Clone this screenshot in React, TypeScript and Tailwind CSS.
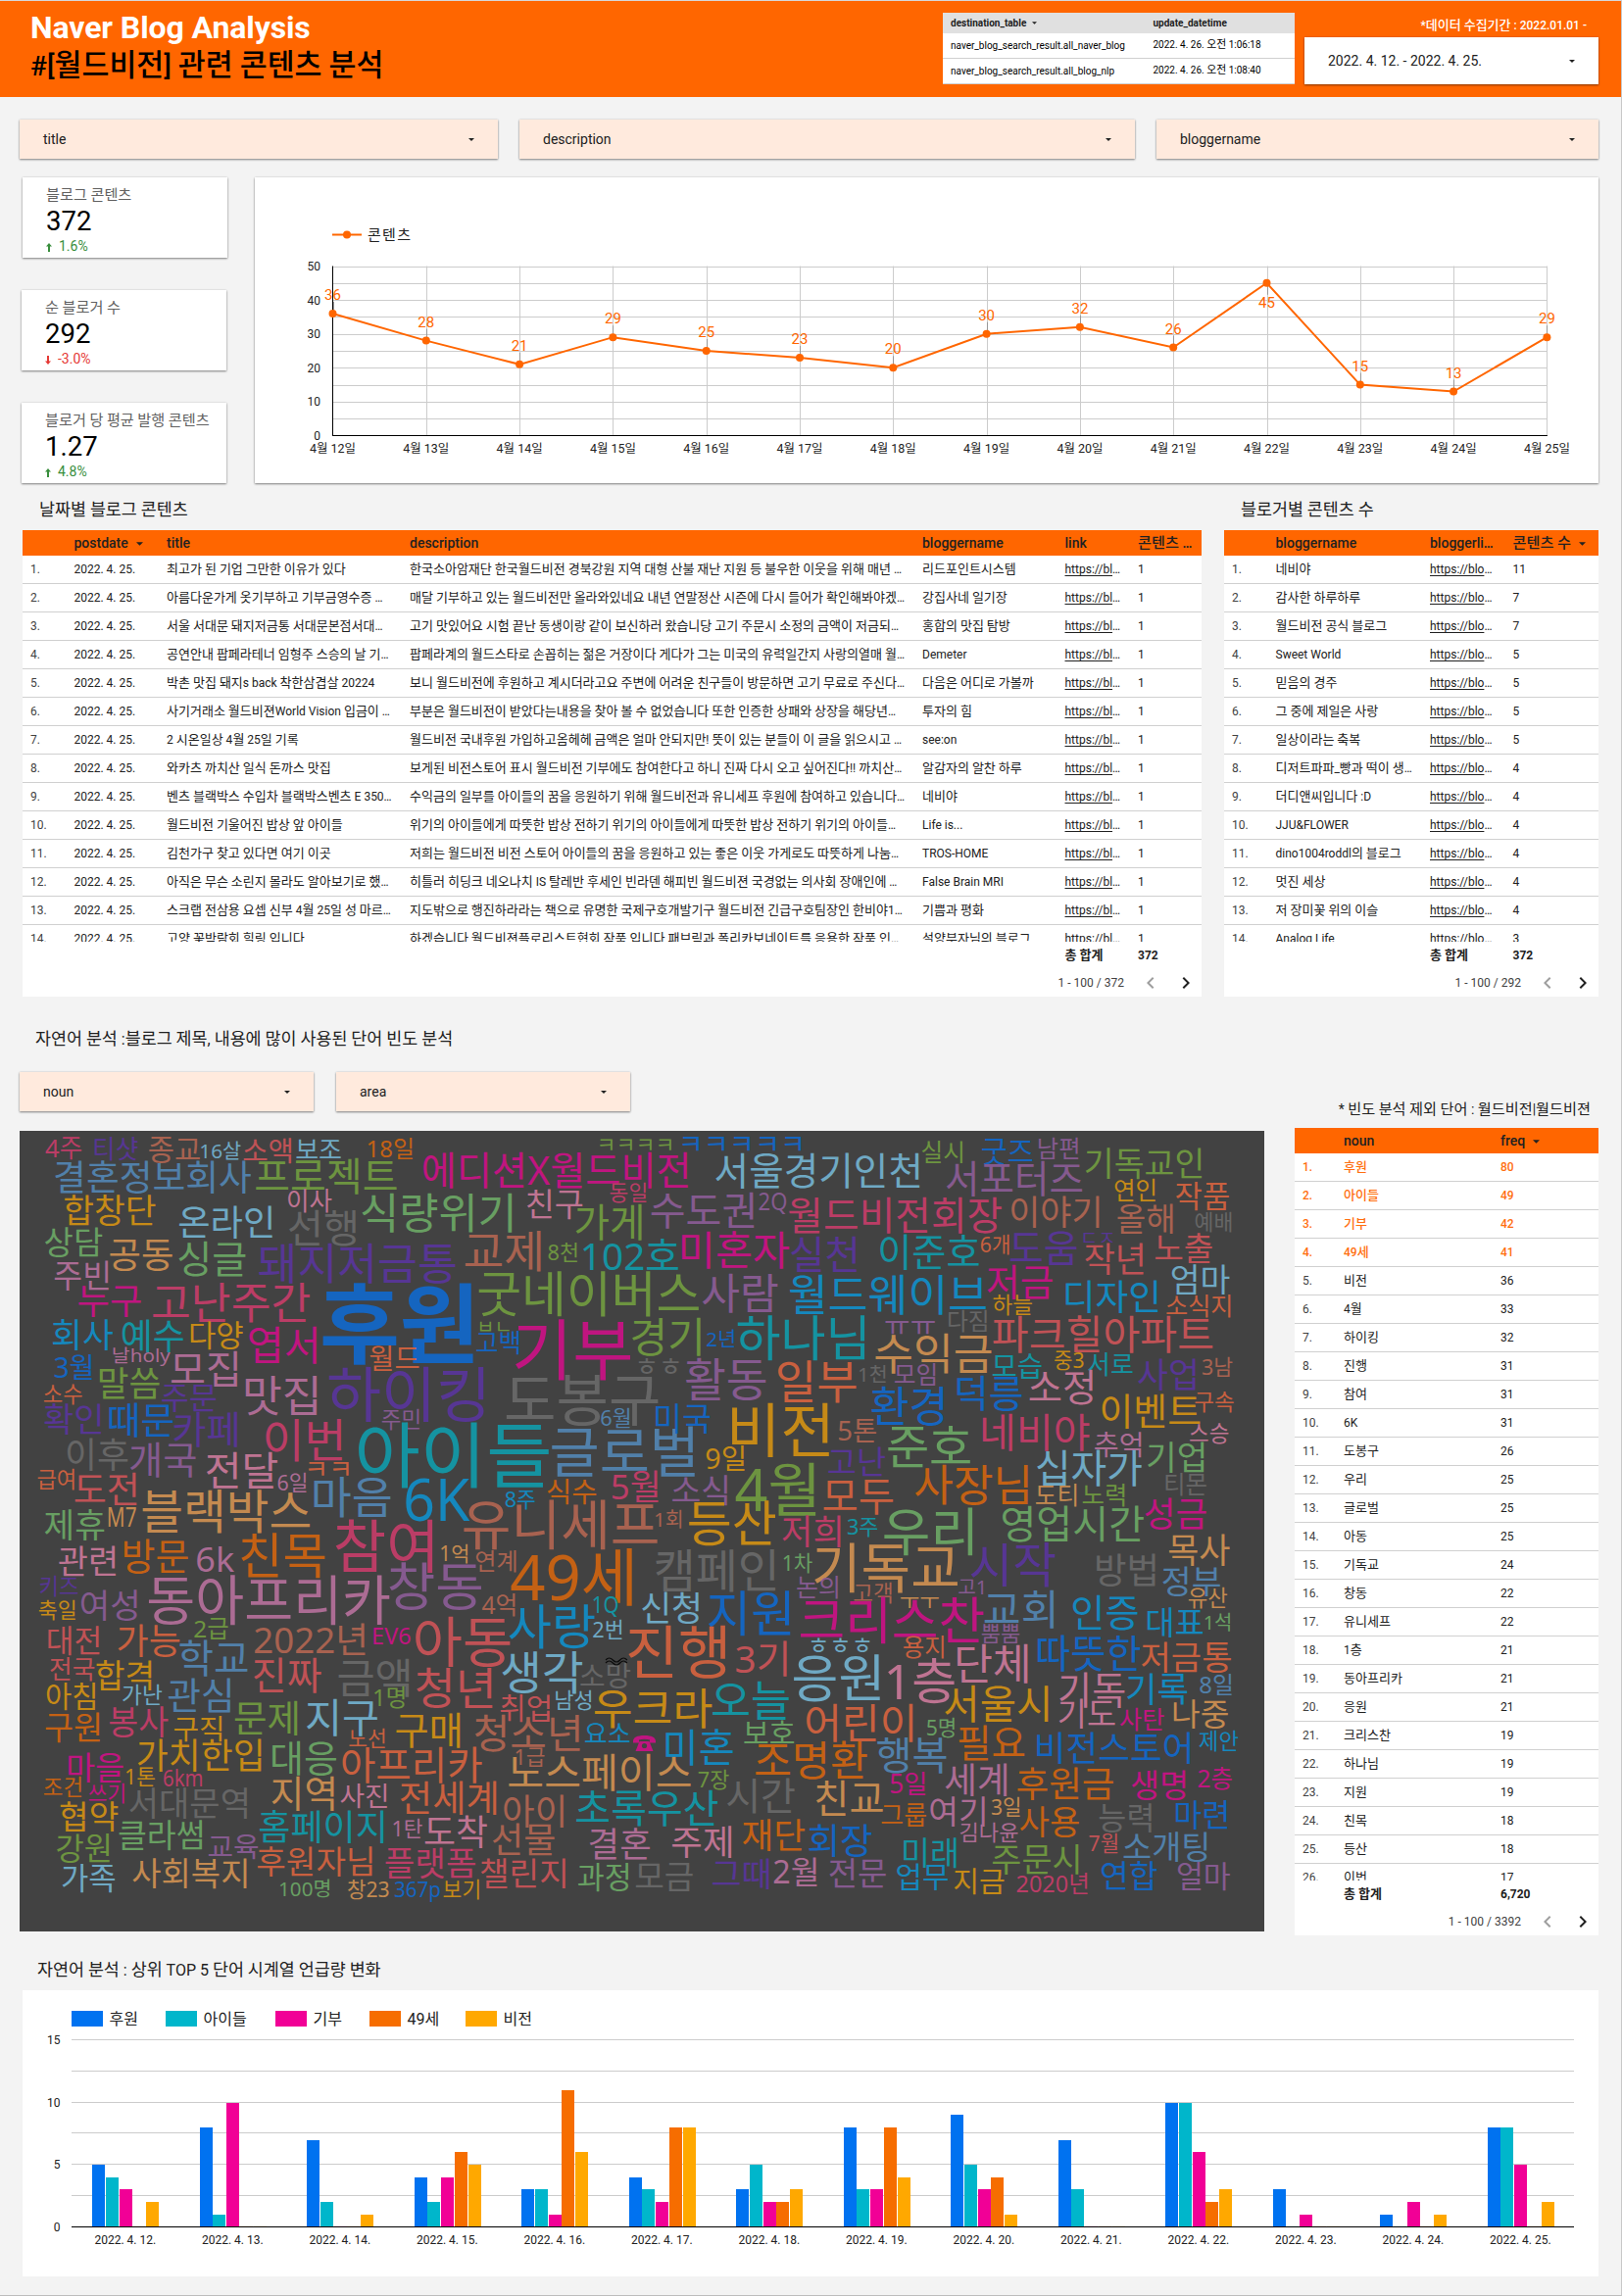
import React from "react";

/* ---------- text helpers ---------- */

const HANGUL = /([\uAC00-\uD7A3\u3131-\u3163]+)/;

/** Latin runs keep the parent's size; Hangul runs are set slightly larger so a syllable fills one em. */
function Ko({ children }: { children: string }) {
  return (
    <>
      {children.split(HANGUL).map((part, i) =>
        i % 2 === 1 ? (
          <span key={i} className="text-[1.085em]">
            {part}
          </span>
        ) : (
          part
        )
      )}
    </>
  );
}

function Caret({ className = "" }: { className?: string }) {
  return (
    <svg viewBox="0 0 6 3" className={`shrink-0 ${className}`} fill="currentColor">
      <path d="M0 0h6L3 3z" />
    </svg>
  );
}

function SectionTitle({ className = "", children }: { className?: string; children: string }) {
  return (
    <h2 className={`whitespace-nowrap text-[16px] leading-[24px] text-[#212121] ${className}`}>
      <Ko>{children}</Ko>
    </h2>
  );
}

const CARD_SHADOW = "shadow-[0_1px_2px_rgba(0,0,0,0.45),0_0_2px_rgba(0,0,0,0.12)]";

function Filter({ label, className }: { label: string; className: string }) {
  return (
    <div
      className={`flex h-[40px] items-center justify-between bg-[#ffeadd] pl-[24px] pr-[24px] text-[14px] text-[#212121] ${CARD_SHADOW} ${className}`}
    >
      <span>{label}</span>
      <Caret className="h-[3px] w-[6px]" />
    </div>
  );
}

/* ---------- header ---------- */

function Header() {
  return (
    <header className="flex h-[98px] bg-[#ff6600] pl-[31px]">
      <div className="w-[931px] whitespace-nowrap pt-[7px] font-bold">
        <div className="text-[32px] leading-[40px] tracking-[-0.1px] text-white">Naver Blog Analysis</div>
        <div className="text-[28px] font-medium leading-[38px] text-black">
          <Ko>#[월드비전] 관련 콘텐츠 분석</Ko>
        </div>
      </div>
      <div className="mt-[12px] h-[73px] w-[359px] bg-white text-[10px] text-black">
        <div className="grid h-[21px] grid-cols-[206.5px_1fr] items-center bg-[#e0e0e0] pl-[8px] font-bold text-[#212121]">
          <span className="flex items-center gap-[6px]">
            destination_table
            <Caret className="h-[3px] w-[5px]" />
          </span>
          <span>update_datetime</span>
        </div>
        {[
          ["naver_blog_search_result.all_naver_blog", "2022. 4. 26. 오전 1:06:18"],
          ["naver_blog_search_result.all_blog_nlp", "2022. 4. 26. 오전 1:08:40"],
        ].map(([name, date]) => (
          <div
            key={name}
            className="grid h-[26px] grid-cols-[206.5px_1fr] items-center border-b border-[#d0d0d0] pl-[8px]"
          >
            <span>{name}</span>
            <span>
              <Ko>{date}</Ko>
            </span>
          </div>
        ))}
      </div>
      <div className="ml-[10px] w-[300px]">
        <div className="flex h-[37px] items-center justify-end pr-[12px] pt-[12px] text-[12px] font-medium leading-[16px] text-white">
          <span>
            <Ko>*데이터 수집기간 : 2022.01.01 -</Ko>
          </span>
        </div>
        <div
          className={`flex h-[48px] items-center justify-between bg-white pl-[24px] pr-[24px] text-[14px] text-[#212121] ${CARD_SHADOW}`}
        >
          <span>2022. 4. 12. - 2022. 4. 25.</span>
          <Caret className="h-[3px] w-[6px]" />
        </div>
      </div>
    </header>
  );
}

/* ---------- score cards ---------- */

function Score({
  label,
  value,
  delta,
  up,
  className = "",
}: {
  label: string;
  value: string;
  delta: string;
  up: boolean;
  className?: string;
}) {
  return (
    <div className={`h-[82px] w-[209px] bg-white pl-[24px] pt-[8px] ${CARD_SHADOW} ${className}`}>
      <div className="whitespace-nowrap text-[14px] leading-[20px] text-[#616161]">
        <Ko>{label}</Ko>
      </div>
      <div className="text-[27.5px] leading-[34px] text-black">{value}</div>
      <div
        className={`flex items-center gap-[7px] text-[14px] leading-[16px] ${
          up ? "text-[#388e3c]" : "text-[#e53935]"
        }`}
      >
        <svg viewBox="0 0 6 9" className={`mt-[3px] h-[9px] w-[6px] ${up ? "" : "rotate-180"}`} fill="currentColor">
          <path d="M3 0l3 3.6H4V9H2V3.6H0z" />
        </svg>
        <span>{delta}</span>
      </div>
    </div>
  );
}

/* ---------- line chart ---------- */

const DAILY = [36, 28, 21, 29, 25, 23, 20, 30, 32, 26, 45, 15, 13, 29];

function LineChart() {
  const x0 = 79.5;
  const step = 95.3;
  const y = (v: number) => 263.5 - v * 3.46;
  const x = (i: number) => x0 + i * step;
  return (
    <svg width="1371" height="312" className="block" fontFamily="Roboto, 'Noto Sans CJK KR', sans-serif">
      <line x1="79" x2="109" y1="58.5" y2="58.5" stroke="#ff6600" strokeWidth="2" />
      <circle cx="94" cy="58.5" r="4" fill="#ff6600" />
      <text x="115" y="64" fontSize="15" textLength="44" fill="#212121">
        콘텐츠
      </text>
      {Array.from({ length: 10 }, (_, i) => (
        <line key={i} x1={x0} x2={x(13)} y1={Math.round(y(i * 5 + 5)) + 0.5} y2={Math.round(y(i * 5 + 5)) + 0.5} stroke="#ccc" />
      ))}
      {DAILY.slice(1).map((_, i) => (
        <line key={i} x1={Math.round(x(i + 1)) + 0.5} x2={Math.round(x(i + 1)) + 0.5} y1={y(50)} y2={y(0)} stroke="#ccc" />
      ))}
      <line x1={x0} x2={x0} y1={y(50)} y2={y(0)} stroke="#000" />
      <line x1={x0 - 0.5} x2={x(13) + 0.5} y1="263.5" y2="263.5" stroke="#000" />
      {[0, 10, 20, 30, 40, 50].map((v) => (
        <text key={v} x="67" y={y(v) + 4.5} fontSize="12" textAnchor="end" fill="#212121">
          {v}
        </text>
      ))}
      {DAILY.map((v, i) => (
        <line
          key={i}
          x1={Math.round(x(i)) + 0.5}
          x2={Math.round(x(i)) + 0.5}
          y1={y(v)}
          y2={v === 45 ? y(v) + 12 : y(v) - 12}
          stroke="#999"
        />
      ))}
      <polyline
        points={DAILY.map((v, i) => `${x(i)},${y(v)}`).join(" ")}
        fill="none"
        stroke="#ff6600"
        strokeWidth="2"
      />
      {DAILY.map((v, i) => (
        <g key={i}>
          <circle cx={x(i)} cy={y(v)} r="4" fill="#ff6600" />
          <text x={x(i)} y={v === 45 ? y(v) + 25 : y(v) - 14} fontSize="15" textAnchor="middle" fill="#ff6600">
            {v}
          </text>
          <text x={x(i)} y="281" fontSize="12" textAnchor="middle" textLength="47" lengthAdjust="spacingAndGlyphs" fill="#212121">
            {`4월 ${12 + i}일`}
          </text>
        </g>
      ))}
    </svg>
  );
}

/* ---------- tables ---------- */

type TableProps = {
  cols: string;
  head: string[];
  sorted: number;
  rows: string[][];
  totals: string[];
  page: string;
  bodyClass: string;
  links?: number;
  highlight?: number;
  className: string;
};

function DataTable({ cols, head, sorted, rows, totals, page, bodyClass, links = -1, highlight = 0, className }: TableProps) {
  return (
    <div className={`bg-white text-[12px] text-[#212121] ${className}`}>
      <div className={`grid h-[26px] items-center bg-[#ff6600] pl-[8px] text-[14px] font-medium text-[#212121] ${cols}`}>
        {head.map((h, i) => (
          <span key={i} className="flex items-center whitespace-nowrap leading-[20px]">
            <span>
              <Ko>{h}</Ko>
            </span>
            {i === sorted && <Caret className="ml-[8px] mt-[2px] h-[4px] w-[7px]" />}
          </span>
        ))}
      </div>
      <div className={`overflow-hidden ${bodyClass}`}>
        {rows.map((r, ri) => (
          <div
            key={ri}
            className={`grid h-[29px] items-center border-b border-[#d0d0d0] pl-[8px] ${cols} ${
              ri < highlight ? "font-medium text-[#ff6f10]" : ""
            }`}
          >
            <span className={ri < highlight ? "" : "text-[#424242]"}>{ri + 1}.</span>
            {r.map((c, ci) => (
              <span key={ci} className="whitespace-nowrap leading-[18px]">
                {ci + 1 === links ? (
                  <>
                    <span className="underline underline-offset-2">{c}</span>…
                  </>
                ) : (
                  <Ko>{c}</Ko>
                )}
              </span>
            ))}
          </div>
        ))}
      </div>
      <div className={`grid h-[28px] items-center pl-[8px] font-bold ${cols}`}>
        {totals.map((t, i) => (
          <span key={i} className="leading-[18px]">
            <Ko>{t}</Ko>
          </span>
        ))}
      </div>
      <div className="flex h-[28px] items-center justify-end pr-[4px]">
        <span className="mr-[15px] text-[#424242]">{page}</span>
        <svg viewBox="0 0 24 24" className="size-[24px] text-[#9e9e9e]" fill="currentColor">
          <path d="M15.41 7.41L14 6l-6 6 6 6 1.41-1.41L10.83 12z" />
        </svg>
        <svg viewBox="0 0 24 24" className="ml-[12px] size-[24px] text-[#212121]" fill="currentColor">
          <path d="M10 6L8.59 7.41 13.17 12l-4.58 4.59L10 18l6-6z" />
        </svg>
      </div>
    </div>
  );
}

const POSTS: [string, string, string][] = [
  ["최고가 된 기업 그만한 이유가 있다", "한국소아암재단 한국월드비전 경북강원 지역 대형 산불 재난 지원 등 불우한 이웃을 위해 매년 …", "리드포인트시스템"],
  ["아름다운가게 옷기부하고 기부금영수증 …", "매달 기부하고 있는 월드비전만 올라와있네요 내년 연말정산 시즌에 다시 들어가 확인해봐야겠…", "강집사네 일기장"],
  ["서울 서대문 돼지저금통 서대문본점서대…", "고기 맛있어요 시험 끝난 동생이랑 같이 보신하러 왔습니당 고기 주문시 소정의 금액이 저금되…", "홍합의 맛집 탐방"],
  ["공연안내 팝페라테너 임형주 스승의 날 기…", "팝페라계의 월드스타로 손꼽히는 젊은 거장이다 게다가 그는 미국의 유력일간지 사랑의열매 월…", "Demeter"],
  ["박촌 맛집 돼지s back 착한삼겹살 20224", "보니 월드비전에 후원하고 계시더라고요 주변에 어려운 친구들이 방문하면 고기 무료로 주신다…", "다음은 어디로 가볼까"],
  ["사기거래소 월드비젼World Vision 입금이 …", "부분은 월드비전이 받았다는내용을 찾아 볼 수 없었습니다 또한 인증한 상패와 상장을 해당년…", "투자의 힘"],
  ["2 시온일상 4월 25일 기록", "월드비전 국내후원 가입하고옴헤헤 금액은 얼마 안되지만! 뜻이 있는 분들이 이 글을 읽으시고 …", "see:on"],
  ["와카츠 까치산 일식 돈까스 맛집", "보게된 비전스토어 표시 월드비전 기부에도 참여한다고 하니 진짜 다시 오고 싶어진다!! 까치산…", "알감자의 알찬 하루"],
  ["벤츠 블랙박스 수입차 블랙박스벤츠 E 350…", "수익금의 일부를 아이들의 꿈을 응원하기 위해 월드비전과 유니세프 후원에 참여하고 있습니다…", "네비야"],
  ["월드비전 기울어진 밥상 앞 아이들", "위기의 아이들에게 따뜻한 밥상 전하기 위기의 아이들에게 따뜻한 밥상 전하기 위기의 아이들…", "Life is..."],
  ["김천가구 찾고 있다면 여기 이곳", "저희는 월드비전 비전 스토어 아이들의 꿈을 응원하고 있는 좋은 이웃 가게로도 따뜻하게 나눔…", "TROS-HOME"],
  ["아직은 무슨 소린지 몰라도 알아보기로 했…", "히틀러 히딩크 네오나치 IS 탈레반 후세인 빈라덴 해피빈 월드비젼 국경없는 의사회 장애인에 …", "False Brain MRI"],
  ["스크랩 전삼용 요셉 신부 4월 25일 성 마르…", "지도밖으로 행진하라라는 책으로 유명한 국제구호개발기구 월드비전 긴급구호팀장인 한비야1…", "기쁨과 평화"],
  ["고양 꽃박람회 힐링 입니다", "하겠습니다 월드비젼플로리스트협회 작품 입니다 패브릭과 폴리카보네이트를 응용한 작품 인…", "설양부자님의 블로그"],
];

const BLOGGERS: [string, string][] = [
  ["네비야", "11"],
  ["감사한 하루하루", "7"],
  ["월드비전 공식 블로그", "7"],
  ["Sweet World", "5"],
  ["믿음의 경주", "5"],
  ["그 중에 제일은 사랑", "5"],
  ["일상이라는 축복", "5"],
  ["디저트파파_빵과 떡이 생…", "4"],
  ["더디앤씨입니다 :D", "4"],
  ["JJU&FLOWER", "4"],
  ["dino1004roddl의 블로그", "4"],
  ["멋진 세상", "4"],
  ["저 장미꽃 위의 이슬", "4"],
  ["Analog Life", "3"],
];

const NOUNS: [string, string][] = [
  ["후원", "80"], ["아이들", "49"], ["기부", "42"], ["49세", "41"], ["비전", "36"], ["4월", "33"], ["하이킹", "32"],
  ["진행", "31"], ["참여", "31"], ["6K", "31"], ["도봉구", "26"], ["우리", "25"], ["글로벌", "25"], ["아동", "25"],
  ["기독교", "24"], ["창동", "22"], ["유니세프", "22"], ["1층", "21"], ["동아프리카", "21"], ["응원", "21"],
  ["크리스찬", "19"], ["하나님", "19"], ["지원", "19"], ["친목", "18"], ["등산", "18"], ["이번", "17"],
];

/* ---------- word cloud ---------- */

const INK: Record<string, string> = {
  B: "#1565c0", T: "#1593a1", M: "#c01580", O: "#c46114", Y: "#c68a17", G: "#6d9440", P: "#573694",
  V: "#c9603f", R: "#bb3d66", K: "#1588be", D: "#666666", E: "#689f62", S: "#5180aa", C: "#c05256",
  N: "#c48a50", U: "#855a8f", W: "#a86250", X: "#bf7492", Q: "#ac6c94", L: "#6fa9c4",
};

/* Each quadrant has an origin and a grid density; a word is "text left right middle ink" on that grid. */
const CLOUD: { ox: number; oy: number; sx: number; words: string }[] = [
  {
    ox: -20, oy: -134, sx: 2.376,
    words: `4주 112 198 456 R,티샷 226 333 458 P,종교 361 485 460 W,16살 485 583 463 L,소액 590 710 463 C,보조 718 827 460 L,18일 890 1003 457 O,ㅋㅋㅋㅋ 1448 1634 444 G,결혼정보회사 132 607 545 S,프로젝트 620 962 540 G,에디션X월드비전 1025 1673 523 M,합창단 156 376 647 Y,온라인 434 665 684 L,이사 696 803 616 X,선행 700 868 700 D,식량위기 876 1250 652 E,친구 1276 1413 628 X,동일 1479 1569 592 R,가게 1395 1561 683 G,상담 109 247 744 E,공동 266 418 783 N,싱글 432 596 793 E,돼지저금통 628 1105 808 P,교제 1127 1317 771 W,8천 1329 1402 773 G,102호 1410 1645 785 T,주빈 132 268 847 Q,누구 190 342 922 M,고난주간 370 750 928 R,후원 783 1155 992 B,굿네이버스 1160 1695 902 G,회사 127 272 1027 K,예수 295 445 1030 T,다양 459 588 1028 Y,엽서 602 775 1058 M,ㅂㄴ 1157 1240 1000 G,고백 1155 1262 1051 B,기부 1247 1530 1074 M,3월 132 227 1128 B,날holy 272 411 1090 Q,모집 415 583 1132 Q,월드 897 1016 1100 V,말씀 238 387 1174 G,소수 106 199 1207 V,주문 392 524 1220 P,맛집 591 777 1215 Q,하이킹 797 1185 1210 P,도봉구 1227 1597 1225 D,확인 108 250 1284 P,때문 262 420 1286 B,카페 420 580 1318 P,주민 926 1020 1286 U,6월 1457 1530 1282 S,이번 640 836 1348 R,아이들 866 1332 1396 T,글로벌 1337 1691 1383 S,이후 160 310 1393 D,개국 315 475 1409 U`,
  },
  {
    ox: 620, oy: -134, sx: 2.34,
    words: `ㅋㅋㅋㅋㅋ 124 423 443 B,실시 703 805 468 G,굿즈 847 968 466 B,남편 980 1080 456 U,기독교인 1093 1376 504 G,서울경기인천 211 703 524 L,서포터즈 762 1087 548 U,연인 1163 1264 585 Y,작품 1310 1437 602 V,수도권 57 308 646 U,2Q 315 380 615 U,월드비전회장 386 893 660 R,이야기 914 1133 650 W,올해 1170 1307 672 W,예배 1356 1445 680 D,미혼자 125 385 768 M,실천 390 553 780 P,이준호 601 840 773 T,6개 844 914 750 V,도움 914 1074 762 P,ㄷㅈ 1083 1165 730 P,작년 1093 1237 794 C,노출 1260 1397 760 C,사람 180 358 900 U,월드웨이브 388 857 904 K,저금 860 1016 863 M,디자인 1042 1272 911 K,엄마 1299 1437 857 L,소식지 1287 1445 938 V,하늘 874 967 935 Y,경기 10 183 1033 G,2년 190 258 1040 B,하나님 263 577 1036 T,ㅠㅠ 616 735 998 U,다짐 765 863 985 D,파크힐아파트 874 1398 1024 C,수익금 592 870 1084 N,모습 872 990 1122 T,중3 1020 1090 1105 Y,서로 1100 1207 1117 T,사업 1220 1363 1148 P,3남 1373 1444 1125 W,ㅎㅎ 20 130 1122 D,활동 140 332 1163 U,일부 357 547 1169 V,1천 552 620 1148 D,모임 638 740 1150 U,환경 583 763 1244 B,덕릉 783 943 1205 B,소정 960 1118 1188 X,이벤트 1130 1368 1260 Y,구속 1355 1448 1233 V,미국 64 198 1284 B,비전 242 490 1320 Y,5톤 504 595 1320 W,네비야 844 1102 1325 R,추억 1116 1232 1363 Q,스승 1343 1436 1328 X,준호 622 820 1370 E,기업 1241 1383 1402 E,9일 188 283 1405 Y,고난 480 615 1416 P,십자가 977 1227 1434 L`,
  },
  {
    ox: -20, oy: 326, sx: 2.376,
    words: `전달 500 672 62 X,ㅋㅋ 740 853 56 V,급여 91 184 88 V,도전 181 336 120 C,6일 673 745 100 Q,마음 757 948 143 S,6K 983 1133 150 K,8주 1225 1297 150 K,식수 1326 1446 127 O,5월 1483 1600 112 R,블랙박스 345 752 188 N,제휴 109 253 230 E,M7 261 329 203 N,유니세프 1124 1595 228 W,관련 143 285 340 X,방문 297 456 323 O,6k 477 565 333 Q,친목 582 789 322 O,참여 813 1060 294 R,1억 1067 1137 315 N,연계 1153 1254 340 W,49세 1242 1541 388 O,키즈 96 189 417 P,축일 94 185 488 Y,여성 195 338 476 U,동아프리카 360 943 460 Q,창동 943 1168 418 U,4억 1170 1253 475 W,1Q 1437 1498 471 T,대전 114 245 583 C,가능 285 436 585 V,2급 471 553 545 G,2022년 617 890 580 W,EV6 903 995 569 M,아동 1005 1238 585 C,사랑 1235 1440 540 K,2번 1438 1511 548 L,학교 435 601 637 S,전국 121 229 670 C,합격 233 373 690 Y,진짜 614 777 690 C,금액 820 998 697 D,생각 1217 1411 680 L,소망 1407 1528 690 D,아침 112 236 752 Y,가난 297 392 750 L,관심 408 566 751 S,1명 905 985 757 G,청년 1009 1200 730 C,취업 1213 1338 790 C,남성 1345 1437 765 L,우크라 1441 1724 790 Y,구원 110 247 848 O,봉사 265 406 832 R,구직 422 543 852 Y,문제 569 726 820 G,지구 743 916 817 L,노선 846 936 882 V,구매 960 1120 857 Y,청소년 1151 1411 867 W,요소 1418 1527 867 K,가치한입 333 640 936 Y,대응 657 816 942 E,마을 163 299 973 M,1톤 304 376 998 Y,6km 397 491 1003 R,조건 106 200 1031 O,쓰기 215 305 1049 M,아프리카 828 1167 965 V,1급 1248 1320 938 W,노스페이스 1233 1675 985 N,협약 146 285 1120 Y,서대문역 314 605 1080 D,지역 659 816 1050 N,사진 826 942 1058 X,전세계 970 1208 1067 V,아이 1220 1373 1106 W,초록우산 1397 1739 1096 T,강원 137 270 1220 G,클라썸 288 495 1180 E,교육 505 626 1213 U,홈페이지 629 937 1155 T,1탄 951 1023 1157 Q,도착 1030 1180 1168 X,선물 1194 1345 1193 W,결혼 1428 1576 1207 Q,가족 150 279 1310 L,사회복지 322 604 1294 N,후원자님 624 908 1260 V,플랫폼 934 1153 1263 R,챌린지 1165 1377 1295 C,100명 677 802 1343 E,창23 843 943 1343 N,367p 957 1067 1345 B,보기 1075 1165 1344 Y,과정 1402 1529 1307 E`,
  },
  {
    ox: 620, oy: 326, sx: 2.34,
    words: `소식 107 245 122 U,4월 262 458 120 G,모두 468 635 140 V,사장님 688 965 107 O,도티 975 1077 138 N,노력 1087 1192 137 G,티몬 1282 1383 105 D,1회 65 133 210 W,등산 147 353 223 Y,저희 371 516 250 R,3주 526 598 234 T,우리 613 835 250 E,영업시간 894 1232 226 E,성금 1236 1383 194 M,캠페인 67 360 368 D,1차 371 441 345 E,기독교 445 790 360 N,시작 820 1020 352 P,방법 1117 1267 367 D,목사 1293 1437 305 N,정부 1278 1416 400 S,유산 1340 1432 452 N,논의 405 508 418 U,고객 541 634 436 W,ㅜㅜ 652 744 460 N,고1 791 858 417 U,신청 34 177 484 L,지원 193 397 500 B,크리스찬 413 850 520 M,교회 853 1027 487 S,인증 1062 1219 498 K,대표 1239 1375 528 K,1석 1377 1443 527 E,진행 0 243 618 V,3기 260 388 638 C,ㅎㅎㅎ 433 585 598 L,응원 397 611 697 L,용지 659 760 604 V,뿜뿜 846 937 560 U,단체 783 962 655 X,1층 617 782 708 X,따뜻한 977 1224 622 B,저금통 1228 1442 633 V,오늘 203 387 767 T,기독 1031 1188 735 X,기록 1192 1338 733 K,8일 1367 1446 718 S,서울시 758 1013 777 Y,기도 1030 1165 806 X,사탄 1177 1281 824 M,나중 1302 1435 808 N,어린이 426 690 835 V,5명 715 785 848 E,보호 279 399 867 E,미혼 87 253 908 K,조명환 306 572 950 O,행복 597 763 933 S,필요 790 949 897 O,비전스토어 974 1350 912 B,제안 1366 1458 890 K,세계 760 911 1008 Q,후원금 931 1161 1022 O,생명 1204 1338 1025 M,2층 1363 1444 1005 M,7장 170 242 1007 G,시간 238 399 1058 D,친교 449 611 1067 N,5일 628 715 1022 M,여기 722 860 1107 Q,3일 870 940 1092 N,그룹 607 714 1117 O,사용 938 1079 1138 O,능력 1127 1257 1127 D,마련 1307 1437 1118 B,주제 107 253 1200 X,재단 276 423 1178 O,회장 433 583 1195 B,김나윤 794 933 1168 Q,미래 656 790 1233 T,7월 1103 1173 1204 C,소개팅 1185 1390 1215 S,주문시 872 1084 1252 G,모금 20 157 1303 D,그때 203 342 1297 P,2월 350 457 1290 Q,전문 482 618 1294 U,업무 643 766 1305 K,지금 780 900 1320 Y,2020년 930 1102 1328 R,연합 1131 1264 1302 B,얼마 1313 1438 1305 U`,
  },
];

function advance(text: string) {
  return [...text].reduce((sum, ch) => sum + (HANGUL.test(ch) ? 0.92 : 0.572), 0);
}

function WordCloud() {
  return (
    <svg
      width="1270"
      height="817"
      className="block bg-[#424242]"
      fontFamily="'Noto Sans', 'Noto Sans CJK KR', sans-serif"
    >
      {CLOUD.flatMap(({ ox, oy, sx, words }, block) =>
        words.split(",").map((entry) => {
          const [text, left, right, mid, ink] = entry.split(" ");
          const width = (+right - +left) / sx;
          const size = width / (advance(text) - 0.08);
          const x = ox + +left / sx;
          const y = oy + +mid / 3;
          return (
            <text
              key={`${block}-${text}`}
              x={x - size * 0.04}
              y={y + size * 0.37}
              fontSize={size}
              fontWeight={text === "후원" ? 700 : 400}
              textLength={width + size * 0.08}
              lengthAdjust="spacingAndGlyphs"
              fill={INK[ink]}
            >
              {text}
            </text>
          );
        })
      )}
      <path
        d="M598 540q3.500-4 7.300 0t7.300 0 7.300 0M598 543q3.500-4 7.300 0t7.300 0 7.300 0"
        fill="none"
        stroke="#0c0c0c"
        strokeWidth="1.2"
      />
      <g transform="translate(626 617)" fill="#c01580">
        <path d="M0 6C0 2 4 0 11.500 0S23 2 23 6v1.500h-6V4.500C13.500 3.500 9.500 3.500 6 4.500v3H0zM6.500 6h10l4 10H2.500z" />
        <circle cx="11.500" cy="10.500" r="2.600" fill="#424242" />
      </g>
    </svg>
  );
}

/* ---------- grouped bar chart ---------- */

const SERIES: [string, string, number][] = [
  ["후원", "#0072f0", 50],
  ["아이들", "#00b6cb", 146],
  ["기부", "#f10096", 258],
  ["49세", "#f66d00", 354],
  ["비전", "#ffa800", 452],
];

const MENTIONS = [
  [5, 4, 3, 0, 2], [8, 1, 10, 0, 0], [7, 2, 0, 0, 1], [4, 2, 4, 6, 5], [3, 3, 1, 11, 6], [4, 3, 2, 8, 8],
  [3, 5, 2, 2, 3], [8, 3, 3, 8, 4], [9, 5, 3, 4, 1], [7, 3, 0, 0, 0], [10, 10, 6, 2, 3], [3, 0, 1, 0, 0],
  [1, 0, 2, 0, 1], [8, 8, 5, 0, 2],
];

function BarChart() {
  const base = 241;
  return (
    <svg width="1608" height="292" className="block" fontFamily="Roboto, 'Noto Sans CJK KR', sans-serif">
      {SERIES.map(([name, fill, x]) => (
        <g key={name}>
          <rect x={x} y="21" width="32" height="16" fill={fill} />
          <text x={x + 38.5} y="35" fontSize="16" fill="#212121">
            {name}
          </text>
        </g>
      ))}
      {[1, 2, 3, 4, 5, 6].map((n) => (
        <line
          key={n}
          x1="50"
          x2="1583"
          y1={Math.round(base - n * 31.85) + 0.5}
          y2={Math.round(base - n * 31.85) + 0.5}
          stroke="#ccc"
        />
      ))}
      {[0, 5, 10, 15].map((v) => (
        <text key={v} x="38.5" y={base - v * 12.74 + 5} fontSize="12" textAnchor="end" fill="#212121">
          {v}
        </text>
      ))}
      {MENTIONS.map((day, d) => (
        <g key={d}>
          {day.map((v, s) => (
            <rect
              key={s}
              x={Math.round(71 + d * 109.5 + s * 13.75)}
              y={v ? Math.round(base - v * 12.7 + 0.5) : base - 1}
              width="13"
              height={v ? Math.round(v * 12.7) : 1}
              fill={SERIES[s][1]}
              opacity={v ? 1 : 0.12}
            />
          ))}
          <text x={104.75 + d * 109.5} y="258.500" fontSize="12" textAnchor="middle" fill="#212121">
            {`2022. 4. ${12 + d}.`}
          </text>
        </g>
      ))}
      <line x1="50" x2="1583" y1={base + 0.5} y2={base + 0.5} stroke="#000" />
    </svg>
  );
}

/* ---------- page ---------- */

export default function App() {
  return (
    <div className="h-[2343px] w-[1655px] overflow-hidden border-b border-r border-t border-b-[#bdbdbd] border-r-[#c8c8c8] border-t-[#d8d8d8] bg-[#f3f3f3] font-[Roboto,'Noto_Sans_CJK_KR',sans-serif]">
      <Header />

      <div className="mt-[23px] flex pl-[20px]">
        <Filter label="title" className="w-[488px]" />
        <Filter label="description" className="ml-[22px] w-[628px]" />
        <Filter label="bloggername" className="ml-[22px] w-[451px]" />
      </div>

      <div className="mt-[19px] flex pl-[22px]">
        <div className="flex w-[238px] flex-col gap-[33px]">
          <Score label="블로그 콘텐츠" value="372" delta="1.6%" up className="ml-[1px]" />
          <Score label="순 블로거 수" value="292" delta="-3.0%" up={false} />
          <Score label="블로거 당 평균 발행 콘텐츠" value="1.27" delta="4.8%" up />
        </div>
        <div className={`h-[312px] w-[1371px] bg-white ${CARD_SHADOW}`}>
          <LineChart />
        </div>
      </div>

      <div className="flex pl-[23px]">
        <div className="w-[1226px]">
          <SectionTitle className="h-[48px] pl-[17px] pt-[15px]">날짜별 블로그 콘텐츠</SectionTitle>
          <DataTable
            className="w-[1203px]"
            cols="grid-cols-[44.5px_94.5px_248px_523px_145.5px_74.5px_1fr]"
            head={["", "postdate", "title", "description", "bloggername", "link", "콘텐츠 …"]}
            sorted={1}
            rows={POSTS.map(([title, desc, name]) => ["2022. 4. 25.", title, desc, name, "https://bl", "1"])}
            links={5}
            totals={["", "", "", "", "", "총 합계", "372"]}
            page="1 - 100 / 372"
            bodyClass="h-[394px]"
          />
        </div>
        <div>
          <SectionTitle className="h-[48px] pl-[17px] pt-[15px]">블로거별 콘텐츠 수</SectionTitle>
          <DataTable
            className="w-[382px]"
            cols="grid-cols-[44.5px_157.5px_84.500px_1fr]"
            head={["", "bloggername", "bloggerli…", "콘텐츠 수"]}
            sorted={3}
            rows={BLOGGERS.map(([name, n]) => [name, "https://blo", n])}
            links={2}
            totals={["", "", "총 합계", "372"]}
            page="1 - 100 / 292"
            bodyClass="h-[394px]"
          />
        </div>
      </div>

      <SectionTitle className="h-[77px] pl-[36px] pt-[31px]">
        자연어 분석 :블로그 제목, 내용에 많이 사용된 단어 빈도 분석
      </SectionTitle>

      <div className="flex pl-[20px]">
        <div className="w-[1301px]">
          <div className="mb-[20px] flex gap-[23px]">
            <Filter label="noun" className="w-[300px]" />
            <Filter label="area" className="w-[300px]" />
          </div>
          <WordCloud />
        </div>
        <div>
          <div className="h-[57px] whitespace-nowrap pr-[8px] pt-[28px] text-right text-[14px] leading-[20px] text-[#212121]">
            <Ko>* 빈도 분석 제외 단어 : 월드비전|월드비젼</Ko>
          </div>
          <DataTable
            className="w-[310px]"
            cols="grid-cols-[42px_160px_1fr]"
            head={["", "noun", "freq"]}
            sorted={2}
            rows={NOUNS.map(([w, n]) => [w, n])}
            highlight={4}
            totals={["", "총 합계", "6,720"]}
            page="1 - 100 / 3392"
            bodyClass="h-[742px]"
          />
        </div>
      </div>

      <SectionTitle className="h-[56px] pl-[38px] pt-[23px]">
        자연어 분석 : 상위 TOP 5 단어 시계열 언급량 변화
      </SectionTitle>
      <div className="ml-[23px] h-[292px] w-[1608px] bg-white">
        <BarChart />
      </div>
    </div>
  );
}
